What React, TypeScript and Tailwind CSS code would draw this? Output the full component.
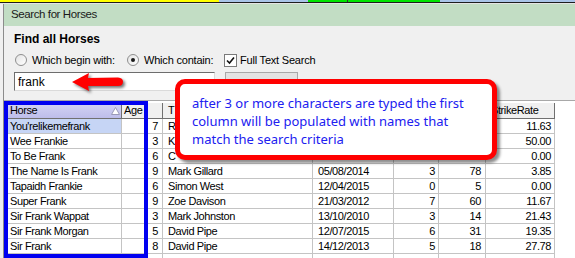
import React from "react"

type Row = {
  horse: string
  age: string
  n: string
  trainer: string
  date: string
  wins: string
  runs: string
  sr: string
}

// the first three rows sit under the callout, only the horse, runs and strike rate show
const rows: Row[] = [
  { horse: "You'relikemefrank", age: "", n: "7", trainer: "R", date: "", wins: "", runs: "", sr: "11.63" },
  { horse: "Wee Frankie", age: "", n: "3", trainer: "K", date: "", wins: "", runs: "", sr: "50.00" },
  { horse: "To Be Frank", age: "", n: "6", trainer: "C", date: "", wins: "", runs: "", sr: "0.00" },
  { horse: "The Name Is Frank", age: "", n: "9", trainer: "Mark Gillard", date: "05/08/2014", wins: "3", runs: "78", sr: "3.85" },
  { horse: "Tapaidh Frankie", age: "", n: "6", trainer: "Simon West", date: "12/04/2015", wins: "0", runs: "5", sr: "0.00" },
  { horse: "Super Frank", age: "", n: "9", trainer: "Zoe Davison", date: "21/03/2012", wins: "7", runs: "60", sr: "11.67" },
  { horse: "Sir Frank Wappat", age: "", n: "3", trainer: "Mark Johnston", date: "13/10/2010", wins: "3", runs: "14", sr: "21.43" },
  { horse: "Sir Frank Morgan", age: "", n: "5", trainer: "David Pipe", date: "12/07/2015", wins: "6", runs: "31", sr: "19.35" },
  { horse: "Sir Frank", age: "", n: "8", trainer: "David Pipe", date: "14/12/2013", wins: "5", runs: "18", sr: "27.78" },
  { horse: "", age: "", n: "", trainer: "", date: "", wins: "", runs: "", sr: "" },
]

// widths include the 1px right border of each cell
const cols = [
  { key: "horse", title: "Horse", cls: "w-[114px] pl-[2px]" },
  { key: "age", title: "Age", cls: "w-[24px] pl-[2px]" },
  { key: "n", title: "", cls: "w-[17px] justify-end pr-[4px]" },
  { key: "trainer", title: "T", cls: "w-[150px] pl-[5px]" },
  { key: "date", title: "", cls: "w-[81px] pl-[5px]" },
  { key: "wins", title: "", cls: "w-[45px] justify-end pr-[3px]" },
  { key: "runs", title: "", cls: "w-[47px] justify-end pr-[4px]" },
  { key: "sr", title: "StrikeRate", cls: "w-[69px] pl-[5px]" },
] as const

function SortArrow() {
  return (
    <svg width="9" height="8" viewBox="0 0 9 8" className="ml-auto mr-[1px] shrink-0">
      <path d="M4.5 0.5 L8.5 7.5 L0.5 7.5 Z" fill="#ffffff" stroke="#9a9ab8" strokeWidth="1" />
    </svg>
  )
}

function Radio({ checked }: { checked?: boolean }) {
  return (
    <span className="w-[12px] h-[12px] rounded-full border border-[#8f8f8f] bg-gradient-to-br from-[#e4e4e4] to-white flex items-center justify-center shrink-0">
      {checked && <span className="w-[4px] h-[4px] rounded-full bg-[#1a1a1a]" />}
    </span>
  )
}

export default function App() {
  return (
    <div className="w-[575px] h-[258px] overflow-hidden relative bg-[#f0f0f0] text-black font-['Liberation_Sans',Arial,sans-serif]">
      {/* strip of the window behind */}
      <div className="flex h-[2px]">
        <div className="w-[219px] bg-[#ffff00]" />
        <div className="w-[89px] bg-[#a9c4e8]" />
        <div className="w-[40px] bg-[#00e400] border-r border-[#333]" />
        <div className="w-[92px] bg-[#00e400]" />
        <div className="flex-1 bg-[#a9c4e8]" />
      </div>
      <div className="h-px bg-[#1e1e1e]" />
      <div className="h-px bg-[#e4e4e4]" />

      <div className="flex">
        <div className="w-[3px] shrink-0" />
        <div className="flex-1 border-l border-[#8c8c8c] flex flex-col">
          <div className="h-[22px] bg-[#c2ddc4] flex items-center pl-[7px] text-[11.5px] tracking-[-0.4px] text-[#1a1a1a]">
            Search for Horses
          </div>

          <div className="mt-[6px] pl-[10px] h-[14px] leading-[14px] text-[12px] font-bold">Find all Horses</div>

          <div className="mt-[6px] h-[16px] flex items-center pl-[11px] text-[11px] tracking-[-0.2px]">
            <Radio />
            <span className="ml-[5px] w-[95px]">Which begin with:</span>
            <Radio checked />
            <span className="ml-[5px] w-[80px]">Which contain:</span>
            <span className="w-[13px] h-[13px] border border-[#7a7a7a] bg-white flex items-center justify-center shrink-0">
              <svg width="9" height="9" viewBox="0 0 9 9">
                <path d="M1 4.5 L3.5 7 L8 1.5" fill="none" stroke="#111" strokeWidth="1.6" />
              </svg>
            </span>
            <span className="ml-[3px]">Full Text Search</span>
          </div>

          <div className="mt-[4px] h-[23px] flex items-start pl-[10px]">
            <div className="w-[201px] h-[19px] bg-white border border-t-[#6d6d6d] border-l-[#6d6d6d] border-r-[#dadada] border-b-[#dadada] flex items-center pl-[3px] text-[12px]">
              frank
            </div>
            <div className="ml-[10px] w-[73px] h-[23px] bg-[#e3e3e3] border border-[#a8a8a8]" />
          </div>

          {/* grid */}
          <div className="mt-[5px] border-t border-[#a8a8a8] bg-white pt-[2px] pl-[4px] text-[11px] tracking-[-0.4px]">
            <div className="flex h-[16px]">
              {cols.map((c) => (
                <div
                  key={c.key}
                  className={`${c.cls} shrink-0 h-full flex items-center border-r border-b border-[#707070] whitespace-nowrap overflow-hidden ${
                    c.key === "horse" ? "bg-gradient-to-b from-[#d4d4f4] to-[#bdbdea]" : "bg-[#f0f0f0]"
                  }`}
                >
                  {c.title}
                  {c.key === "horse" && <SortArrow />}
                </div>
              ))}
            </div>
            {rows.map((r, i) => (
              <div key={i} className="flex h-[15px]">
                {cols.map((c) => (
                  <div
                    key={c.key}
                    className={`${c.cls} shrink-0 h-full flex items-center border-r border-b border-[#c4c4c4] whitespace-nowrap overflow-hidden ${
                      c.key === "sr" ? "justify-end pl-0 pr-[3px]" : ""
                    } ${i === 0 && c.key === "horse" ? "bg-[#c6d5f5]" : ""}`}
                  >
                    {r[c.key]}
                  </div>
                ))}
              </div>
            ))}
          </div>
        </div>
      </div>

      {/* blue highlight round the first column */}
      <div className="absolute left-[4px] top-[101px] w-[144px] h-[157px] border-4 border-[#0000f0]" />

      {/* red arrow */}
      <svg
        width="60"
        height="26"
        viewBox="0 0 60 26"
        className="absolute left-[68px] top-[70px] drop-shadow-[2px_2px_1.5px_rgba(0,0,0,0.55)]"
      >
        <path d="M4 12 L21 3 L20 8 L50 7.5 Q55 8 55 11.75 Q55 16 50 16 L20 16 L21 21 Z" fill="#ff0000" />
      </svg>

      {/* callout */}
      <div className="absolute left-[175px] top-[79px] w-[322px] h-[81px] bg-white border-[5px] border-[#ff0000] rounded-[10px] shadow-[3px_3px_3px_rgba(0,0,0,0.45)] pl-[12px] pt-[10px] text-[13px] leading-[18px] text-[#2020f0] font-['Noto_Sans',sans-serif]">
        <div>after 3 or more characters are typed the first</div>
        <div>column will be populated with names that</div>
        <div>match the search criteria</div>
      </div>
    </div>
  )
}
